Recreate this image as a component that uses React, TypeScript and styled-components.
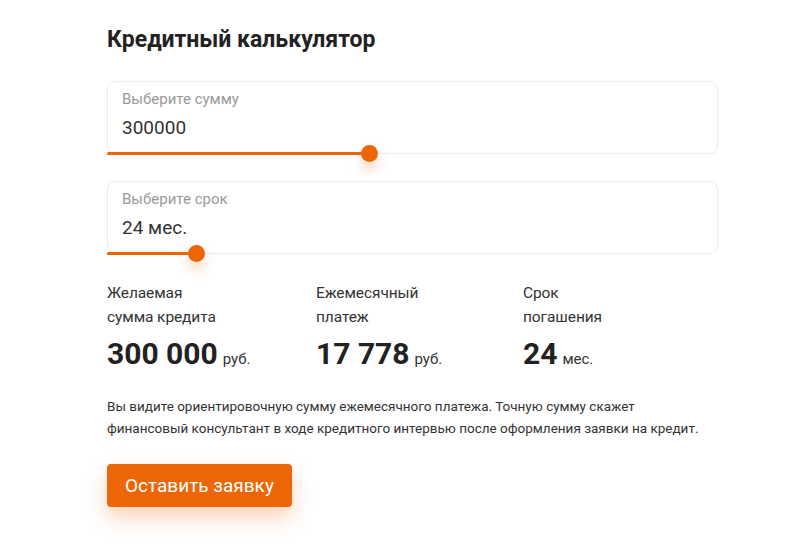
import React, { useState } from 'react'
import styled, { createGlobalStyle } from 'styled-components'

const GlobalStyle = createGlobalStyle`
  body {
    margin: 0;
    background: #fff;
    font-family: Roboto, "Noto Sans", sans-serif;
    color: #333;
  }
`

const fmt = (n: number) => String(n).replace(/\B(?=(\d{3})+(?!\d))/g, ' ')

export default function App() {
    const [sum] = useState(300000)
    const [term] = useState(24)
    const monthly = 17778

    return (
        <>
            <GlobalStyle />
            <Wrapper>
                <Title>Кредитный калькулятор</Title>
                <Field>
                    <Label>Выберите сумму</Label>
                    <Value>{sum}</Value>
                    <Slider>
                        <Fill style={{ width: '43%' }}>
                            <Thumb />
                        </Fill>
                    </Slider>
                </Field>
                <Field>
                    <Label>Выберите срок</Label>
                    <Value>{term} мес.</Value>
                    <Slider>
                        <Fill style={{ width: '14.7%' }}>
                            <Thumb />
                        </Fill>
                    </Slider>
                </Field>
                <Stats>
                    <Stat>
                        <StatLabel>Желаемая<br />сумма кредита</StatLabel>
                        <StatValue>{fmt(sum)}<Unit>руб.</Unit></StatValue>
                    </Stat>
                    <Stat>
                        <StatLabel>Ежемесячный<br />платеж</StatLabel>
                        <StatValue>{fmt(monthly)}<Unit>руб.</Unit></StatValue>
                    </Stat>
                    <Stat>
                        <StatLabel>Срок<br />погашения</StatLabel>
                        <StatValue>{term}<Unit>мес.</Unit></StatValue>
                    </Stat>
                </Stats>
                <Note>
                    Вы видите ориентировочную сумму ежемесячного платежа. Точную сумму скажет<br />
                    финансовый консультант в ходе кредитного интервью после оформления заявки на кредит.
                </Note>
                <Button>Оставить заявку</Button>
            </Wrapper>
        </>
    )
}

const Wrapper = styled.div`
  width: 611px;
  padding: 26px 0 40px 107px;
`

const Title = styled.h2`
  margin: 0 0 27px;
  font-size: 23px;
  line-height: 28px;
  font-weight: 700;
  color: #222;
`

const Field = styled.div`
  position: relative;
  height: 73px;
  box-sizing: border-box;
  border: 1px solid #ececec;
  border-radius: 8px;
  padding: 8px 14px 0;
  margin-bottom: 27px;
`

const Label = styled.div`
  font-size: 15px;
  line-height: 18px;
  color: #999;
`

const Value = styled.div`
  margin-top: 9px;
  font-size: 19px;
  line-height: 22px;
  color: #333;
`

const Slider = styled.div`
  position: absolute;
  left: -1px;
  right: -1px;
  bottom: -2px;
  height: 3px;
`

const Fill = styled.div`
  position: relative;
  height: 3px;
  background: #ec6608;
  border-radius: 2px;
`

const Thumb = styled.span`
  position: absolute;
  top: -7px;
  right: -8px;
  width: 17px;
  height: 17px;
  border-radius: 50%;
  background: #ec6608;
  box-shadow: 0 8px 12px rgba(236, 102, 8, 0.25);
`

const Stats = styled.div`
  display: grid;
  grid-template-columns: 209px 207px 1fr;
  margin-top: 5px;
`

const Stat = styled.div`
  display: flex;
  flex-direction: column;
`

const StatLabel = styled.div`
  font-size: 15.5px;
  line-height: 24px;
  letter-spacing: -0.1px;
  color: #333;
`

const StatValue = styled.div`
  margin-top: 7px;
  font-size: 30px;
  line-height: 36px;
  font-weight: 700;
  color: #222;
`

const Unit = styled.span`
  margin-left: 5px;
  font-size: 15px;
  font-weight: 400;
  color: #333;
`

const Note = styled.p`
  margin: 18px 0 25px;
  font-size: 13.5px;
  line-height: 22px;
  white-space: nowrap;
  color: #333;
`

const Button = styled.button`
  height: 43px;
  padding: 0 18px;
  border: none;
  border-radius: 4px;
  background: #ec6608;
  color: #fff;
  font-family: inherit;
  font-size: 19px;
  cursor: pointer;
  box-shadow: 0 10px 20px rgba(236, 102, 8, 0.3);
`
